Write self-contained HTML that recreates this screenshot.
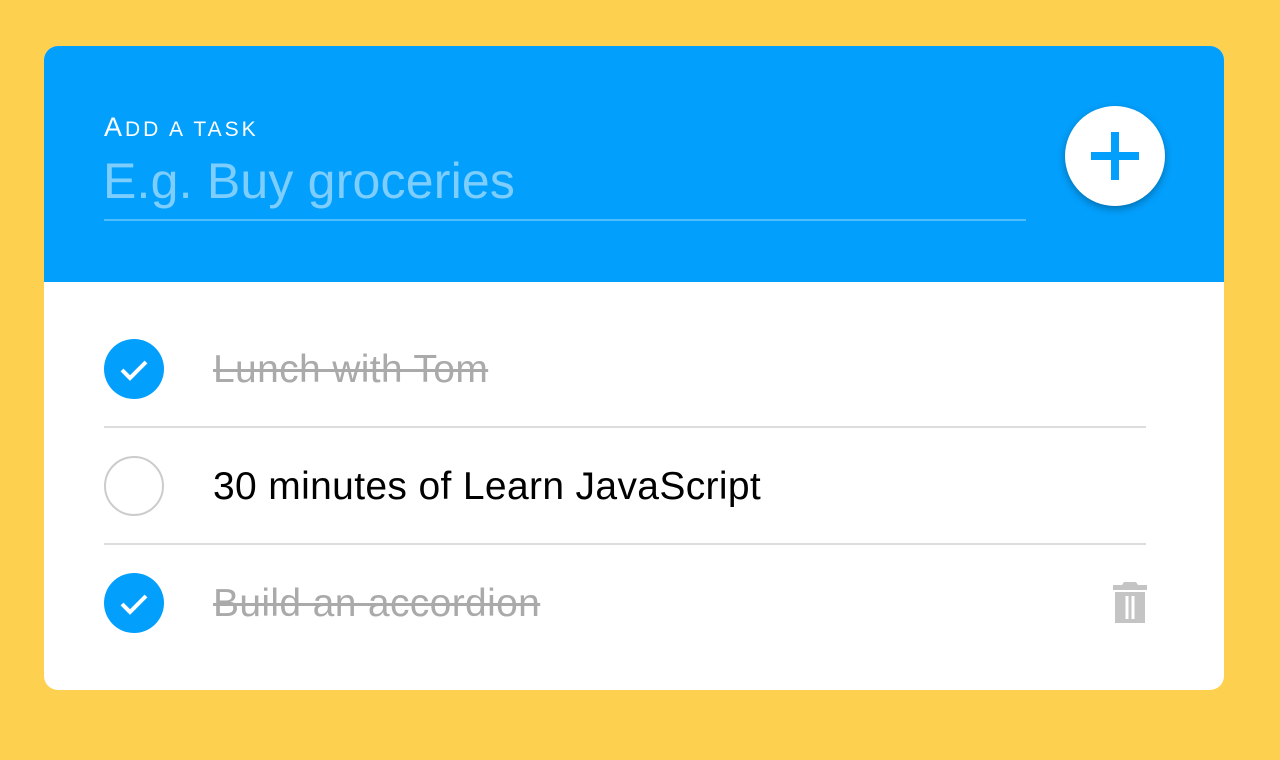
<!DOCTYPE html><html><head><style>
body{margin:0;width:1280px;height:760px;background:#FED04F;font-family:"Liberation Sans",sans-serif;position:relative;overflow:hidden}
.card{position:absolute;left:44px;top:46px;width:1180px;height:644px;background:#fff;border-radius:14px;overflow:hidden}
.hd{position:absolute;left:0;top:0;width:1180px;height:236px;background:#039FFC}
.lbl{position:absolute;left:60px;top:66px;color:#fff;font-size:21px;letter-spacing:3px;text-transform:uppercase}
.lbl b{font-weight:normal;font-size:27px}
.ph{position:absolute;left:59px;top:106px;color:#7DCEFD;font-size:50px;letter-spacing:0.2px}
.ul{position:absolute;left:60px;top:173px;width:922px;height:2px;background:#4FBDFD}
.plus{position:absolute;left:1021px;top:60px;width:100px;height:100px;border-radius:50%;background:#fff;box-shadow:0 3px 8px rgba(0,0,0,.3)}
.row{position:absolute;left:60px;width:1042px;height:117px}
.cb{position:absolute;left:0;top:30px;width:60px;height:60px;border-radius:50%;box-sizing:border-box}
.on{background:#039FFC}.off{border:2px solid #ccc}
.t{position:absolute;left:109px;top:39px;font-size:39px;letter-spacing:0.35px;color:#000}
.done{color:#aaa;text-decoration:line-through}
.div{position:absolute;left:60px;width:1042px;height:2px;background:#ddd}
</style></head><body>
<div class="card">
<div class="hd">
<div class="lbl"><b>A</b>dd a task</div>
<div class="ph">E.g. Buy groceries</div>
<div class="ul"></div>
<div class="plus"><svg width="100" height="100"><path d="M50 26V74M26 50H74" stroke="#039FFC" stroke-width="8"/></svg></div>
</div>
<div class="row" style="top:263px"><div class="cb on"><svg width="60" height="60"><path d="M18 31l8 8 16-16" stroke="#fff" stroke-width="4" fill="none"/></svg></div><div class="t done">Lunch with Tom</div></div>
<div class="div" style="top:380px"></div>
<div class="row" style="top:380px"><div class="cb off"></div><div class="t">30 minutes of Learn JavaScript</div></div>
<div class="div" style="top:497px"></div>
<div class="row" style="top:497px"><div class="cb on"><svg width="60" height="60"><path d="M18 31l8 8 16-16" stroke="#fff" stroke-width="4" fill="none"/></svg></div><div class="t done">Build an accordion</div>
<svg style="position:absolute;left:1009px;top:39px" width="34" height="42"><path d="M11 0h12l2 3h9v5H0V3h9z" fill="#c4c4c4"/><path d="M2 10h30v31H2z" fill="#c4c4c4"/><path d="M14 14v23M20 14v23" stroke="#fff" stroke-width="3"/></svg></div>
</div>
</body></html>
